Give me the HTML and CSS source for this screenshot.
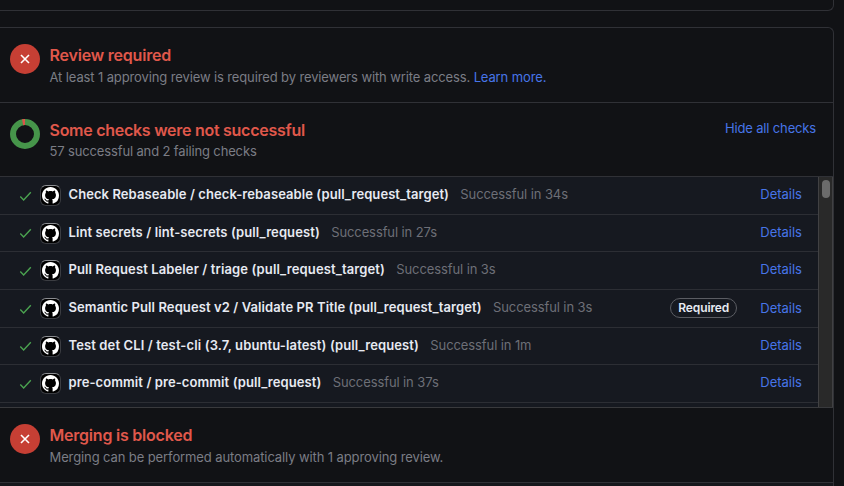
FILE: index.html
```html
<!DOCTYPE html>
<html lang="en">
<head>
<meta charset="utf-8">
<title>Pull request checks</title>
<link rel="stylesheet" href="styles.css">
</head>
<body>
<svg class="symbols" width="0" height="0">
  <symbol id="mark" viewBox="0 0 16 16"><path d="M8 0C3.58 0 0 3.58 0 8c0 3.54 2.29 6.53 5.47 7.59.4.07.55-.17.55-.38 0-.19-.01-.82-.01-1.49-2.01.37-2.53-.49-2.69-.94-.09-.23-.48-.94-.82-1.13-.28-.15-.68-.52-.01-.53.63-.01 1.08.58 1.23.82.72 1.21 1.87.87 2.33.66.07-.52.28-.87.51-1.07-1.78-.2-3.64-.89-3.64-3.95 0-.87.31-1.59.82-2.15-.08-.2-.36-1.02.08-2.12 0 0 .67-.21 2.2.82.64-.18 1.32-.27 2-.27s1.36.09 2 .27c1.53-1.04 2.2-.82 2.2-.82.44 1.1.16 1.92.08 2.12.51.56.82 1.27.82 2.15 0 3.07-1.87 3.75-3.65 3.95.29.25.54.73.54 1.48 0 1.07-.01 1.93-.01 2.2 0 .21.15.46.55.38A8.01 8.01 0 0 0 16 8c0-4.42-3.58-8-8-8z"/></symbol>
  <symbol id="check" viewBox="0 0 14 12"><path d="M1.4 6.6 5 10.2 12.7 2"/></symbol>
  <symbol id="cross" viewBox="0 0 10 10"><path d="M1 1 9 9M9 1 1 9"/></symbol>
</svg>
<div class="previous-card"></div>
<main class="card">
  <section class="section review">
    <span class="status"><svg><use href="#cross"/></svg></span>
    <div class="copy">
      <h2 class="t-review">Review required</h2>
      <p><span class="s-review">At least 1 approving review is required by reviewers with write access.</span> <a class="learn">Learn more.</a></p>
    </div>
  </section>
  <section class="section summary">
    <svg class="donut" viewBox="0 0 30 30"><circle cx="15" cy="15" r="12"/><path d="M12.6 3.2A12 12 0 0 1 15 3"/></svg>
    <div class="copy">
      <h2 class="t-checks">Some checks were not successful</h2>
      <p class="s-checks">57 successful and 2 failing checks</p>
    </div>
    <a class="hide">Hide all checks</a>
  </section>
  <section class="checks">
    <ul class="list">
      <li class="row"><svg class="tick"><use href="#check"/></svg><span class="avatar"><svg><use href="#mark"/></svg></span><strong class="n1">Check Rebaseable / check-rebaseable (pull_request_target)</strong><span class="time">Successful in 34s</span><a class="details">Details</a></li>
      <li class="row short"><svg class="tick"><use href="#check"/></svg><span class="avatar"><svg><use href="#mark"/></svg></span><strong class="n2">Lint secrets / lint-secrets (pull_request)</strong><span class="time">Successful in 27s</span><a class="details">Details</a></li>
      <li class="row"><svg class="tick"><use href="#check"/></svg><span class="avatar"><svg><use href="#mark"/></svg></span><strong>Pull Request Labeler / triage (pull_request_target)</strong><span class="time">Successful in 3s</span><a class="details">Details</a></li>
      <li class="row"><svg class="tick"><use href="#check"/></svg><span class="avatar"><svg><use href="#mark"/></svg></span><strong class="n4">Semantic Pull Request v2 / Validate PR Title (pull_request_target)</strong><span class="time">Successful in 3s</span><span class="required">Required</span><a class="details">Details</a></li>
      <li class="row short"><svg class="tick"><use href="#check"/></svg><span class="avatar"><svg><use href="#mark"/></svg></span><strong>Test det CLI / test-cli (3.7, ubuntu-latest) (pull_request)</strong><span class="time">Successful in 1m</span><a class="details">Details</a></li>
      <li class="row"><svg class="tick"><use href="#check"/></svg><span class="avatar"><svg><use href="#mark"/></svg></span><strong class="n6">pre-commit / pre-commit (pull_request)</strong><span class="time">Successful in 37s</span><a class="details">Details</a></li>
    </ul>
    <div class="scrollbar"><div class="thumb"></div></div>
  </section>
  <section class="section blocked">
    <span class="status"><svg><use href="#cross"/></svg></span>
    <div class="copy">
      <h2 class="t-blocked">Merging is blocked</h2>
      <p class="s-blocked">Merging can be performed automatically with 1 approving review.</p>
    </div>
  </section>
  <div class="footer"></div>
</main>
</body>
</html>
```

FILE: styles.css
```css
* { box-sizing: border-box; }
body {
  margin: 0;
  height: 486px;
  overflow: hidden;
  background: #111215;
  color: #7b7d85;
  font: 13px/18px Inter, "Liberation Sans", sans-serif;
}
h2, p, ul { margin: 0; padding: 0; }
a { color: #4775e8; white-space: nowrap; }
.symbols { display: none; }
.previous-card {
  width: 834px;
  height: 11px;
  border: solid #303136;
  border-width: 0 1px 1px 0;
  border-bottom-right-radius: 6px;
}
.card {
  width: 834px;
  height: 459px;
  margin-top: 16px;
  border: solid #303136;
  border-width: 1px 1px 0 0;
  border-top-right-radius: 6px;
  overflow: hidden;
}
.section {
  display: flex;
  align-items: flex-start;
  height: 75px;
  padding: 16px 17px 0 10px;
  border-bottom: 1px solid #303136;
}
.summary { height: 74px; }
.status {
  display: grid;
  place-items: center;
  flex: none;
  width: 30px;
  height: 30px;
  border-radius: 50%;
  background: #c63f34;
}
.status svg {
  width: 10px;
  height: 10px;
  fill: none;
  stroke: #fff;
  stroke-width: 1.6;
}
.donut { flex: none; width: 30px; height: 30px; fill: none; stroke: #46954a; stroke-width: 6; }
.donut path { stroke: #d9564a; }
.copy { flex: 1; margin-left: 9.5px; white-space: nowrap; }
h2 {
  height: 22px;
  color: #e0584b;
  font-size: 16px;
  font-weight: 600;
  line-height: 22px;
  letter-spacing: -0.27px;
}
h2.t-review { letter-spacing: -0.2px; }
h2.t-blocked { letter-spacing: -0.22px; }
.copy p { margin-top: 2px; letter-spacing: -0.12px; }
.copy p.s-blocked { letter-spacing: -0.105px; }
.summary .copy p { margin-top: 1px; letter-spacing: -0.14px; }
.hide { letter-spacing: -0.16px; }
.checks { display: flex; height: 231px; background: #161920; border-bottom: 1px solid #393a3d; }
.list { flex: 1; list-style: none; }
.row {
  display: flex;
  align-items: center;
  height: 38px;
  padding: 0 16px 3px 19px;
  border-bottom: 1px solid #2c2e34;
  white-space: nowrap;
}
.row.short { height: 37px; }
.tick { flex: none; width: 13px; height: 12px; margin-top: 3px; fill: none; stroke: #4ba350; stroke-width: 1.5; }
.avatar {
  display: grid;
  place-items: center;
  flex: none;
  width: 21px;
  height: 21px;
  margin: 3px 7.5px 0 8px;
  border: 1px solid #3b3d42;
  border-top-color: #8b8d91;
  border-radius: 6px;
  background: #000;
}
.avatar svg { width: 17px; height: 17px; fill: #fff; }
.row strong { color: #e7eaf2; font-weight: 600; letter-spacing: 0.12px; }
.row .n1 { letter-spacing: 0.08px; }
.row .n2 { letter-spacing: 0.1px; }
.row .n4 { letter-spacing: 0.1px; }
.row .n6 { letter-spacing: 0.09px; }
.time { margin-left: 11.3px; color: #6d6f77; letter-spacing: -0.1px; }
.details { margin-left: auto; }
.required {
  height: 20px;
  margin-top: 2px;
  margin-left: auto;
  padding: 0 7px;
  border: 1px solid #5b5d63;
  border-radius: 10px;
  color: #e7eaf2;
  font-size: 12px;
  font-weight: 600;
  line-height: 18px;
  letter-spacing: -0.1px;
}
.required + .details { margin-top: 2px; margin-left: 23px; }
.scrollbar {
  width: 15px;
  padding: 3px 2px 0 3px;
  border: solid #414143;
  border-width: 0 1px;
  background: #292929;
}
.thumb { width: 8px; height: 18px; border-radius: 4px; background: #6b6b6b; }
.footer { height: 4px; background: #16181c; }
```
